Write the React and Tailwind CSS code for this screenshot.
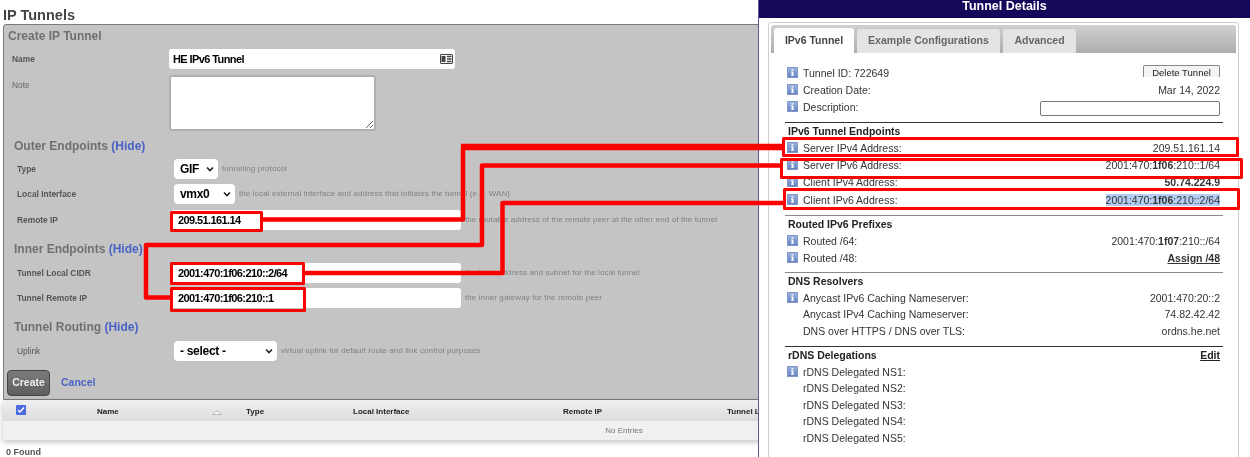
import React from 'react';

const sans = { fontFamily: '"Liberation Sans", Arial, sans-serif' };

const InfoIcon = () => (
  <svg width="11" height="11" viewBox="0 0 11 11" className="shrink-0">
    <defs>
      <linearGradient id="infoFill" x1="0" y1="0" x2="0" y2="1">
        <stop offset="0" stopColor="#9db2de" />
        <stop offset="1" stopColor="#6484c0" />
      </linearGradient>
    </defs>
    <rect x="0" y="0" width="11" height="11" rx="0.5" fill="#8096c8" />
    <rect x="1" y="1" width="9" height="9" fill="url(#infoFill)" />
    <rect x="4.6" y="2.2" width="1.8" height="1.4" fill="#fff" />
    <path d="M4 4.6h2.4v3.2h0.7v1H4v-1h0.7V5.6H4z" fill="#fff" />
  </svg>
);

const CardIcon = () => (
  <svg width="13" height="10" viewBox="0 0 13 10">
    <rect x="0.5" y="0.5" width="12" height="9" rx="0.5" fill="#fff" stroke="#444" />
    <rect x="1.5" y="2" width="4" height="6" fill="#444" />
    <path d="M7 2.5h4.5M7 5h4.5M7 7.5h4.5" stroke="#444" strokeWidth="1.4" />
  </svg>
);

const Hint = ({ children }) => <span className="ml-1 text-[8px] tracking-[0.1px] text-[#808080] whitespace-nowrap">{children}</span>;

const TextBox = ({ value }) => (
  <div className="flex h-5 w-[290px] items-center rounded-[3px] bg-white pl-[7px] text-[11px] font-bold tracking-[-0.6px] text-black">
    {value}
  </div>
);

const SelectBox = ({ value, width }) => (
  <div className={`flex h-5 items-center justify-between rounded-[4px] bg-white pl-1.5 pr-1 text-[12px] font-bold tracking-[-0.3px] text-black ${width}`}>
    <span>{value}</span>
    <svg width="8" height="6" viewBox="0 0 8 6"><path d="M1 1.5l3 3 3-3" fill="none" stroke="#222" strokeWidth="1.6" /></svg>
  </div>
);

const SectionTitle = ({ children, className }) => (
  <h3 className={`pl-[9px] text-[12px] font-bold text-[#707070] ${className}`}>
    {children} <span className="text-[#4a63c4]">(Hide)</span>
  </h3>
);

const RowLabel = ({ children, width = 'w-[169px]', bold = true }) => (
  <span className={`pl-[12px] text-[8.4px] text-[#555] ${width} ${bold ? 'font-bold' : ''}`}>{children}</span>
);

const DetailRow = ({ label, value, icon = true, height = 'h-[17px]' }) => (
  <div className={`flex items-center justify-between text-[10.5px] text-[#333] ${height}`}>
    <div className="flex items-center">
      <span className="flex w-[18px] justify-start pl-[2px] -mt-[3px]">{icon && <InfoIcon />}</span>
      <span>{label}</span>
    </div>
    <div className="pr-[3px]">{value}</div>
  </div>
);

const Heading = ({ children, right, border = 'border-[#888]', className = 'mt-[6px]' }) => (
  <div className={`flex h-[18px] items-center justify-between border-t pl-[3px] pr-[3px] text-[10.5px] font-bold text-[#222] ${border} ${className}`}>
    <span>{children}</span>
    {right}
  </div>
);

const TunnelDetails = () => (
  <aside className="absolute right-0 top-0 h-[457px] w-[492px] border-l border-[#5d55a5] bg-white">
    <div className="h-[18px] bg-[#14085a] text-center text-[12.5px] font-bold leading-[13px] text-white">Tunnel Details</div>
    <div className="mx-[9px] mt-[4px] h-[470px] w-[471px] rounded-[3px] border border-[#cfcfcf] p-[2px]">
      <div className="flex h-[28px] items-end rounded-t-[3px] bg-gradient-to-b from-[#d0d0d0] to-[#aeaeae] pl-[3px]">
        <div className="flex h-[25px] w-[80px] items-center justify-center rounded-t-[3px] bg-white text-[10.5px] font-bold text-[#444]">IPv6 Tunnel</div>
        <div className="ml-[3px] flex h-[24px] w-[143px] items-center justify-center rounded-t-[3px] bg-[#e4e4e4] text-[10.5px] font-bold text-[#666]">Example Configurations</div>
        <div className="ml-[3px] flex h-[24px] w-[73px] items-center justify-center rounded-t-[3px] bg-[#e4e4e4] text-[10.5px] font-bold text-[#666]">Advanced</div>
      </div>

      <div className="ml-[14px] mr-[13px] mt-[12px]">
        <DetailRow
          label="Tunnel ID: 722649"
          value={<div className="-mt-[5px] flex h-[12px] w-[77px] items-start justify-center overflow-hidden rounded-t-[2px] border border-b-0 border-[#888] bg-[#f4f4f4] text-[9.5px] leading-[13px] text-[#222]">Delete Tunnel</div>}
        />
        <DetailRow label="Creation Date:" value="Mar 14, 2022" />
        <DetailRow
          label="Description:"
          value={<div className="mt-[2px] h-[15px] w-[180px] rounded-[2px] border border-[#777] bg-white" />}
        />

        <Heading border="border-[#333]">IPv6 Tunnel Endpoints</Heading>
        <DetailRow label="Server IPv4 Address:" value="209.51.161.14" />
        <DetailRow label="Server IPv6 Address:" value={<>2001:470:<b>1f06</b>:210::1/64</>} />
        <DetailRow label="Client IPv4 Address:" value={<b>50.74.224.9</b>} height="h-[18px]" />
        <DetailRow label="Client IPv6 Address:" value={<span className="bg-[#b3cdf3]">2001:470:<b>1f06</b>:210::2/64</span>} />

        <Heading>Routed IPv6 Prefixes</Heading>
        <DetailRow label="Routed /64:" value={<>2001:470:<b>1f07</b>:210::/64</>} />
        <DetailRow label="Routed /48:" value={<b className="underline">Assign /48</b>} />

        <Heading className="mt-[5px]">DNS Resolvers</Heading>
        <DetailRow label="Anycast IPv6 Caching Nameserver:" value="2001:470:20::2" />
        <DetailRow label="Anycast IPv4 Caching Nameserver:" value="74.82.42.42" icon={false} height="h-[16.5px]" />
        <DetailRow label="DNS over HTTPS / DNS over TLS:" value="ordns.he.net" icon={false} height="h-[16.5px]" />

        <Heading border="border-[#333]" right={<span className="underline">Edit</span>}>rDNS Delegations</Heading>
        <DetailRow label="rDNS Delegated NS1:" />
        <DetailRow label="rDNS Delegated NS2:" icon={false} height="h-[16.5px]" />
        <DetailRow label="rDNS Delegated NS3:" icon={false} height="h-[16.5px]" />
        <DetailRow label="rDNS Delegated NS4:" icon={false} height="h-[16.5px]" />
        <DetailRow label="rDNS Delegated NS5:" icon={false} height="h-[16.5px]" />
      </div>
    </div>
  </aside>
);

// red callouts drawn on top of the screenshot
const Callouts = () => (
  <svg className="pointer-events-none absolute left-0 top-0" width="1250" height="457" fill="none" stroke="#ff0000" strokeLinejoin="round">
    <rect x="171.5" y="212.5" width="90" height="18" strokeWidth="3" />
    <rect x="171.5" y="263.5" width="132" height="20" strokeWidth="3" />
    <rect x="171.5" y="288.5" width="133" height="22" strokeWidth="3" />
    <rect x="783.5" y="138.5" width="454" height="17" strokeWidth="3" />
    <rect x="781.5" y="159.5" width="460" height="18" strokeWidth="3" />
    <rect x="784.5" y="189.5" width="454" height="19" strokeWidth="3" />
    <path d="M263 219.5H463V147" strokeWidth="4.5" />
    <path d="M461 147H783" strokeWidth="6.5" />
    <path d="M170 297.5H146V245H482V165.5H781" strokeWidth="4.5" />
    <path d="M305 273H502.5V203H784" strokeWidth="4.5" />
  </svg>
);

const App = () => {
  return (
    <div className="relative h-[457px] w-[1250px] overflow-hidden bg-white blur-[0.3px]" style={sans}>
      <div className="pl-[3px] pr-[5px]">
        <h1 className="h-[24px] pt-[7px] text-[14.5px] font-bold leading-[17px] text-[#444]">IP Tunnels</h1>

        <div className="h-[376px] rounded-t-[3px] border border-[#7c7c7c] bg-[#c4c4c4] pl-[1px]">
          <h2 className="h-[24px] pl-[3px] pt-[2px] text-[12px] font-bold text-[#707070]">Create IP Tunnel</h2>

          <div className="flex h-[20px] items-center">
            <span className="w-[164px] pl-[7px] text-[8.4px] font-bold text-[#555]">Name</span>
            <div className="flex h-5 w-[286px] items-center justify-between rounded-[3px] bg-white pl-[4px] pr-[1px] text-[11px] font-bold tracking-[-0.6px] text-black">
              <span>HE IPv6 Tunnel</span>
              <span className="mr-[1px]"><CardIcon /></span>
            </div>
          </div>
          <div className="mt-[6px] flex h-[56px]">
            <span className="w-[164px] pl-[7px] pt-[4px] text-[8.4px] text-[#666]">Note</span>
            <textarea readOnly className="h-[56px] w-[207px] rounded-[3px] border-2 border-[#b0b0b0] bg-white" />
          </div>

          <SectionTitle className="mt-[6px] h-[22px]">Outer Endpoints</SectionTitle>
          <div className="flex h-[20px] items-center">
            <RowLabel>Type</RowLabel>
            <SelectBox value="GIF" width="w-[44px]" />
            <Hint>tunneling protocol</Hint>
          </div>
          <div className="mt-[5px] flex h-[20px] items-center">
            <RowLabel>Local Interface</RowLabel>
            <SelectBox value="vmx0" width="w-[61px]" />
            <Hint>the local external interface and address that initiates the tunnel (e.g. WAN)</Hint>
          </div>
          <div className="mt-[6px] flex h-[20px] items-center">
            <RowLabel width="w-[166px]">Remote IP</RowLabel>
            <TextBox value="209.51.161.14" />
            <Hint>the routable address of the remote peer at the other end of the tunnel</Hint>
          </div>

          <SectionTitle className="mt-[11px] h-[22px] leading-[16px]">Inner Endpoints</SectionTitle>
          <div className="flex h-[20px] items-center">
            <RowLabel width="w-[166px]">Tunnel Local CIDR</RowLabel>
            <TextBox value="2001:470:1f06:210::2/64" />
            <Hint>the local address and subnet for the local tunnel</Hint>
          </div>
          <div className="mt-[5px] flex h-[20px] items-center">
            <RowLabel width="w-[166px]">Tunnel Remote IP</RowLabel>
            <TextBox value="2001:470:1f06:210::1" />
            <Hint>the inner gateway for the remote peer</Hint>
          </div>

          <SectionTitle className="mt-[10px] h-[23px]">Tunnel Routing</SectionTitle>
          <div className="flex h-[20px] items-center">
            <RowLabel bold={false}>Uplink</RowLabel>
            <SelectBox value="- select -" width="w-[103px]" />
            <Hint>virtual uplink for default route and link control purposes</Hint>
          </div>

          <div className="mt-[9px] flex items-center pl-[2px]">
            <button className="flex h-[26px] w-[43px] items-center justify-center rounded-[4px] border border-[#444] bg-gradient-to-b from-[#7b7b7b] to-[#5e5e5e] text-[10.5px] font-bold text-[#eee]">Create</button>
            <a className="ml-[11px] text-[10.5px] font-bold text-[#4a63c4]">Cancel</a>
          </div>
        </div>

        <div className="shadow-[0_2px_6px_rgba(0,0,0,0.25)]">
          <div className="relative flex h-[21px] items-center bg-gradient-to-b from-[#f0f0f0] to-[#dcdcdc] pt-[3px] text-[8px] font-bold text-[#222]">
            <span className="-mt-[4px] ml-[13px] flex h-[10px] w-[10px] items-center justify-center rounded-[1px] bg-[#4a6ae0]">
              <svg width="8" height="8" viewBox="0 0 8 8"><path d="M1 4l2 2 4-4.5" fill="none" stroke="#fff" strokeWidth="1.5" /></svg>
            </span>
            <span className="ml-[71px] w-[115px]">Name</span>
            <svg width="10" height="5" viewBox="0 0 10 5" className="w-[10px]"><path d="M0.5 4.5L5 0.5l4.5 4z" fill="#f4f4f4" stroke="#999" strokeWidth="0.6" /></svg>
            <span className="ml-[24px] w-[107px]">Type</span>
            <span className="w-[210px]">Local Interface</span>
            <span className="w-[164px]">Remote IP</span>
            <span>Tunnel Local</span>
          </div>
          <div className="flex h-[19px] items-center justify-center bg-[#f0f0f0] text-[8px] text-[#777]">No Entries</div>
        </div>

        <div className="mt-[7px] pl-[3px] text-[9px] font-bold leading-[10px] text-[#555]">0 Found</div>
      </div>

      <TunnelDetails />
      <Callouts />
    </div>
  );
};

export default App;
